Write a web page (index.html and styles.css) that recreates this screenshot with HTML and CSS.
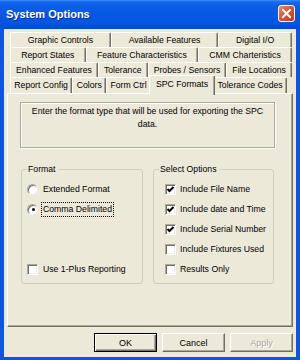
FILE: index.html
```html
<!DOCTYPE html>
<html lang="en">
<head>
  <meta charset="UTF-8" />
  <meta name="viewport" content="width=device-width, initial-scale=1.0" />
  <title>System Options</title>
  <link rel="stylesheet" href="styles.css">
</head>

<body>
  <div class="window">
    <div class="titlebar">
      <span class="title">System Options</span>
      <span class="close">
        <svg width="15" height="15" viewBox="0 0 15 15">
          <path d="M4 4 L11 11 M11 4 L4 11" stroke="#fff" stroke-width="2" stroke-linecap="square" />
        </svg>
      </span>
    </div>

    <div class="client">
      <!-- Pestañas en cuatro filas, la de adelante tiene la seleccionada -->
      <div class="tabs">
        <div class="tab-row">
          <span class="tab">Graphic Controls</span>
          <span class="tab">Available Features</span>
          <span class="tab">Digital I/O</span>
        </div>
        <div class="tab-row">
          <span class="tab">Report States</span>
          <span class="tab">Feature Characteristics</span>
          <span class="tab">CMM Charteristics</span>
        </div>
        <div class="tab-row">
          <span class="tab">Enhanced Features</span>
          <span class="tab">Tolerance</span>
          <span class="tab">Probes / Sensors</span>
          <span class="tab">File Locations</span>
        </div>
        <div class="tab-row front">
          <span class="tab">Report Config</span>
          <span class="tab">Colors</span>
          <span class="tab">Form Ctrl</span>
          <span class="tab active">SPC Formats</span>
          <span class="tab">Tolerance Codes</span>
        </div>
      </div>

      <div class="panel">
        <div class="note">Enter the format type that will be used for exporting the SPC<br>data.</div>

        <div class="groups">
          <div class="group format">
            <span class="legend">Format</span>
            <label class="option"><span class="radio"></span>Extended Format</label>
            <label class="option"><span class="radio checked"></span><span class="focus">Comma Delimited</span></label>
            <label class="option bottom"><span class="check"></span>Use 1-Plus Reporting</label>
          </div>

          <div class="group select">
            <span class="legend">Select Options</span>
            <label class="option"><span class="check checked"></span>Include File Name</label>
            <label class="option"><span class="check checked"></span>Include date and Time</label>
            <label class="option"><span class="check checked"></span>Include Serial Number</label>
            <label class="option"><span class="check"></span>Include Fixtures Used</label>
            <label class="option"><span class="check"></span>Results Only</label>
          </div>
        </div>
      </div>

      <div class="buttons">
        <button class="default">OK</button>
        <button>Cancel</button>
        <button disabled>Apply</button>
      </div>
    </div>
  </div>
</body>

</html>
```

FILE: styles.css
```css
body {
  margin: 0;
  font-family: "Liberation Sans", Arial, sans-serif;
  font-size: 8.7px;
  color: #000;
}

.window {
  width: 300px;
  height: 360px;
  background-color: #0b55e2;
  display: flex;
  flex-direction: column;
  overflow: hidden;
}

.titlebar {
  height: 29px;
  flex: none;
  display: flex;
  align-items: center;
  justify-content: space-between;
  padding: 0 5px 0 6px;
  box-sizing: border-box;
  background: linear-gradient(#3b8df5 0, #1468ec 2px, #0a5fe8 6px, #0558e4 50%, #0555e2 80%, #0048d2 100%);
}

.title {
  color: #fff;
  font-weight: bold;
  font-size: 11px;
  margin-top: -1px;
  text-shadow: 1px 1px #0a2f9c;
}

.close {
  width: 15px;
  height: 15px;
  border: 1px solid #fff;
  border-radius: 3px;
  background: linear-gradient(135deg, #f0896b 0%, #dd5436 45%, #c8371b 100%);
  display: flex;
  margin-top: -2px;
}

.client {
  flex: 1;
  margin: 0 4px 3px;
  padding: 3px 3px 0;
  background-color: #ece9d8;
  display: flex;
  flex-direction: column;
}

/* Pestañas */
.tabs {
  padding: 0 1px 0 3px;
}

.tab-row {
  display: flex;
  height: 15px;
}

.tab-row.front {
  height: 16px;
  margin-right: 5px;
}

.tab {
  flex: auto;
  text-align: center;
  line-height: 15px;
  white-space: nowrap;
  padding: 0 2px;
  background-color: #ece9d8;
  border-top: 1px solid #fff;
  border-left: 1px solid #fff;
  border-right: 1px solid #716f64;
  box-shadow: inset -1px 0 #aca899;
  border-radius: 2px 2px 0 0;
}

.front .tab {
  padding: 0 1px;
}

.tab.active {
  flex: none;
  position: relative;
  z-index: 1;
  margin: -2px -2px 0;
  height: 19px;
  padding: 0 6px;
  line-height: 17px;
}

/* Panel de la pestaña */
.panel {
  height: 234px;
  box-sizing: border-box;
  border: 1px solid;
  border-color: #fff #716f64 #716f64 #fff;
  box-shadow: inset -1px -1px #aca899;
  padding: 8px 0 0 12px;
}

.note {
  width: 255px;
  height: 46px;
  box-sizing: border-box;
  border: 1px solid #aca899;
  box-shadow: inset 1px 1px #fff, 1px 1px #fff;
  text-align: center;
  line-height: 13px;
  padding: 2px 0 0;
  white-space: nowrap;
}

.groups {
  display: flex;
  gap: 10px;
  margin: 21px 0 0 1px;
}

.group {
  height: 115px;
  box-sizing: border-box;
  border: 1px solid #d0d0bf;
  border-radius: 3px;
  display: flex;
  flex-direction: column;
  padding-bottom: 4px;
}

.group.format {
  width: 122px;
  padding-left: 5px;
}

.group.select {
  width: 121px;
  padding-left: 11px;
}

.legend {
  align-self: flex-start;
  margin: -6px 0 4px 0;
  padding: 0 2px 0 1px;
  line-height: 11px;
  background-color: #ece9d8;
}

.select .legend {
  margin-left: -6px;
}

.option {
  display: flex;
  align-items: center;
  height: 20px;
  white-space: nowrap;
}

.option.bottom {
  margin-top: auto;
}

.radio {
  width: 11px;
  height: 11px;
  box-sizing: border-box;
  border-radius: 50%;
  background-color: #fff;
  border: 1px solid;
  border-color: #aca899 #f1efe2 #f1efe2 #aca899;
  box-shadow: inset 1px 1px #716f64;
  margin-right: 5px;
  display: flex;
  align-items: center;
  justify-content: center;
}

.radio.checked::after {
  content: "";
  width: 3px;
  height: 3px;
  border-radius: 50%;
  background-color: #000;
  margin: 1px 0 0 1px;
}

.check {
  width: 11px;
  height: 11px;
  box-sizing: border-box;
  background-color: #fff;
  border: 1px solid;
  border-color: #aca899 #fff #fff #aca899;
  box-shadow: inset 1px 1px #716f64, inset -1px -1px #f1efe2;
  margin-right: 4px;
  flex: none;
}

.format .check {
  margin-right: 5px;
}

.check.checked {
  background: #fff url("data:image/svg+xml,%3Csvg xmlns='http://www.w3.org/2000/svg' width='9' height='9'%3E%3Cpath d='M1.5 4 L3.5 6 L7.5 2' stroke='%23000' stroke-width='2' fill='none'/%3E%3C/svg%3E") center no-repeat;
}

.focus {
  border: 1px dotted #000;
  padding: 1px 1px 2px;
  margin-left: -2px;
}

/* Botones de abajo */
.buttons {
  display: flex;
  justify-content: flex-end;
  gap: 5px;
  margin-top: 6px;
}

button {
  width: 63px;
  height: 19px;
  padding: 0;
  font-family: inherit;
  font-size: 9px;
  color: #000;
  background-color: #ece9d8;
  border: 1px solid;
  border-color: #fff #716f64 #716f64 #fff;
  box-shadow: inset -1px -1px #aca899;
}

button.default {
  border-color: #000;
  box-shadow: inset 1px 1px #fff, inset -1px -1px #716f64, inset -2px -2px #aca899;
}

button:disabled {
  color: #aca899;
  text-shadow: 1px 1px #fff;
}
```
